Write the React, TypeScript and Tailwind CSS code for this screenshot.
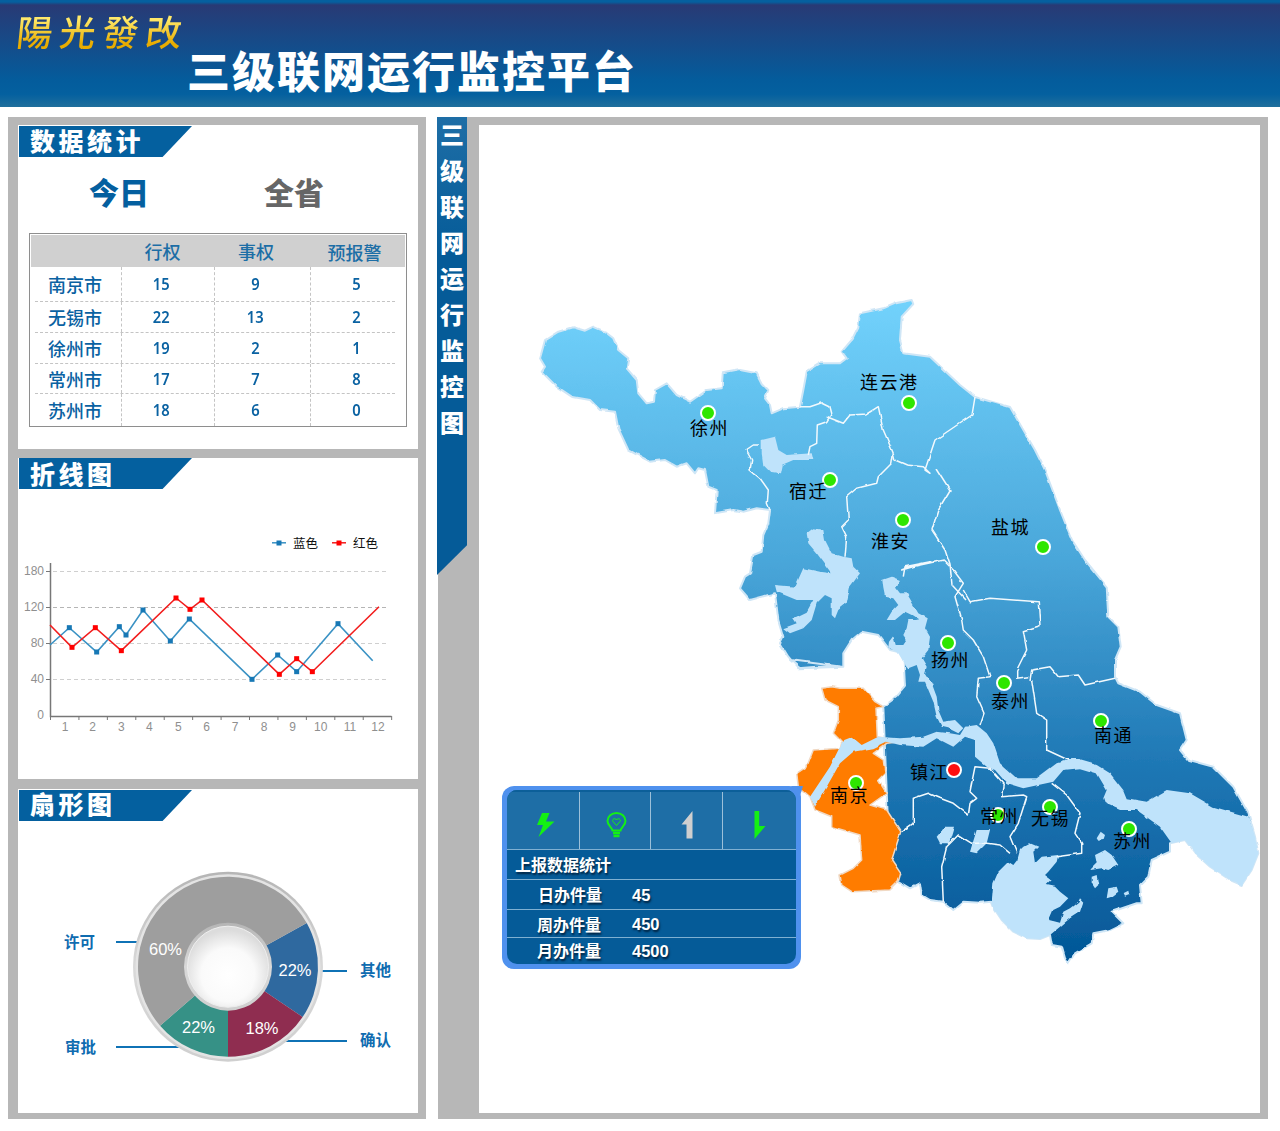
import React from "react";

const cjk = "font-['Noto_Sans_CJK_SC','Noto_Sans',sans-serif]";

type Pt = [number, number];
// traced from crops of the map, each at 3x scale from its own origin
const from = (ox: number, oy: number) => (p: number[]): Pt[] => {
  const out: Pt[] = [];
  for (let i = 0; i < p.length; i += 2) out.push([ox + p[i] / 3, oy + p[i + 1] / 3]);
  return out;
};
const a = from(530, 290);
const b = from(790, 560);
const c = from(980, 830);
const d = from(875, 570);
const pts = (p: Pt[]) => p.map(([x, y]) => `${x.toFixed(1)},${y.toFixed(1)}`).join(" ");

const outline: Pt[] = [
  ...a([30,205,45,150,85,125,130,112,165,122,190,110,225,125,250,145,265,180,295,205,290,235,320,270,325,310,350,340,372,335,375,300,410,280,440,315,480,335,530,300,575,295,578,250,630,240,680,250,695,280,715,300,705,325,720,345,725,370,760,355,810,350,820,300,830,245,870,220,930,220,950,205,935,185,965,150,985,110,990,70,1060,55,1095,40,1145,30,1150,42,1115,80,1110,150,1120,190,1200,200]),
  [960, 385],[975, 397],[1010, 407],[1035, 450],[1045, 470],[1060, 510],[1072, 540],
  ...b([885,0,950,80,955,170,985,200,992,260,975,300,975,350,985,370,1050,395,1100,435,1170,460,1190,540,1170,570,1195,600,1270,620,1330,680,1375,760,1395,830,1405,880,1385,930,1355,975,1320,960,1260,920,1215,880,1185,840,1140,850,1140,875,1085,900,1075,950,1050,975,1055,1030]),
  ...c([470,220,395,245,430,280,390,300,340,310,335,340,285,370,265,400,255,385,245,350,215,345,210,315,180,327,140,325,100,305,65,270,45,240,35,215,0,218]),
  ...b([520,1025,490,1050,460,1025,420,1020,395,1005,390,970,360,985,325,965,300,940,280,440,320,410,345,380,340,280,300,270,265,225,215,215,185,240,160,280,160,320,30,325,0,300]),
  ...a([935,1130,860,1130,805,1135,775,1100,750,1060,760,1040,745,990,735,910,660,930,630,895,645,860,660,850,670,795,695,785,700,735,715,700,720,660,680,655,640,665,610,660,555,670,560,600,535,590,525,540,505,535,495,550,470,520,440,530,405,510,360,515,295,480,265,415,255,365,210,360,180,330,125,320,80,290,35,245,45,230]),
];

const nanjing = b([95,385,125,380,150,385,220,385,255,425,280,440,258,445,262,530,320,540,330,545,290,550,250,580,280,600,285,640,265,660,290,700,240,735,290,750,332,815,305,900,332,940,325,965,300,990,185,995,155,975,150,945,190,925,215,900,210,825,125,800,125,770,75,750,60,710,25,680,20,640,50,620,70,570,150,565,155,545,130,520,145,480,145,440,105,420]);

const water: Pt[][] = [
  // 洪泽湖
  a([830,730,850,715,880,720,885,750,905,790,940,800,965,805,970,830,990,850,960,890,950,940,925,960,915,985,905,975,905,925,885,915,860,940,845,990,820,1015,780,1030,760,1015,800,1000,790,985,830,965,850,930,800,930,740,905,735,885,795,890,820,835,870,845,905,850,860,790,835,760]),
  // 骆马湖
  a([695,450,735,440,745,480,770,495,845,490,850,510,790,510,755,525,750,550,720,545,700,525,695,490]),
  // 高邮湖
  d([22,30,50,20,75,30,60,50,75,70,95,70,110,95,130,130,158,145,150,175,165,200,160,240,140,265,155,290,150,310,170,340,185,380,190,420,205,455,240,450,265,475,250,490,220,475,200,470,185,440,175,395,150,335,130,335,135,315,125,285,100,295,85,275,70,250,40,232,42,215,55,198,62,225,85,225,95,210,85,195,95,175,100,150,120,150,130,148,110,135,90,125,60,150,35,150,50,125,70,105,55,85,30,80,25,55]),
  // 长江
  b([60,710,120,620,160,540,185,530,215,555,265,530,330,535,400,530,440,515,480,520,510,525,525,500,560,495,590,520,610,550,630,610,680,655,740,655,800,610,850,595,920,615,960,640,1000,690,1010,715,1070,725,1130,690,1200,700,1270,740,1375,770,1395,830,1405,880,1385,930,1355,975,1320,960,1260,920,1215,880,1185,840,1145,850,1110,800,1040,750,990,750,945,730,940,715,950,690,920,640,870,625,820,630,790,665,700,685,650,670,615,630,590,620,555,590,555,540,525,530,490,560,440,535,400,560,330,555,290,545,250,565,190,575,150,610,110,680,75,740]),
  // 太湖
  c([35,215,40,160,55,125,85,95,100,105,112,90,120,60,130,50,150,40,175,50,160,65,165,100,185,80,235,75,230,95,205,125,195,135,215,150,200,165,225,170,240,185,265,205,240,230,220,240,207,270,240,278,250,245,270,235,295,215,300,205,310,215,300,245,270,265,240,290,210,315,180,327,140,325,100,305,65,270,45,240]),
  b([440,830,465,800,495,800,480,850,450,850]),
  b([540,875,560,810,600,810,590,850,560,880]),
  c([350,25,362,5,375,15,370,30,355,32]),
  c([330,120,350,100,345,75,375,60,395,75,415,105,385,120,365,115]),
  c([335,140,350,135,355,165,345,175,335,160]),
  c([380,205,385,175,410,170,415,185,395,200]),
  c([430,190,445,182,448,195,435,200]),
];

const borders: Pt[][] = [
  a([810,350,840,350,875,338,900,350,905,370,890,395,862,405,860,460,840,470,835,495]),
  a([690,465,670,465,648,480,665,510,660,540,690,565,715,600,712,640,720,660]),
  [...a([890,380,940,400,960,375,1010,372,1045,350,1060,420,1090,490,1095,510,1130,525,1180,530,1200,550]), [925, 470], [935, 440], [972, 415], [975, 397]],
  [[936, 468],[950, 490],[938, 510],[932, 530],[945, 550],[950, 565],[952, 585],[966, 600]],
  a([1090,490,1085,520,1045,560,1040,580,980,595,950,620,955,690,935,710,950,740,945,800]),
  [...a([1120,860,1125,830,1200,815]), ...b([335,30,345,25,460,0,490,30,520,70,495,110,515,180,520,210,550,240,580,290,600,350,565,355,560,410,582,460,570,495])],
  b([520,90,540,125,600,115,745,125,750,200,700,215,710,270,680,330,680,355,715,350]),
  b([720,360,725,330,780,320,805,350,865,345,885,375,975,355]),
  b([725,360,740,460,770,480,770,570,835,600]),
  b([335,815,370,790,370,715,415,700,450,715,490,730,535,765,540,730,560,715,540,695,555,620,600,625,640,670]),
  b([640,670,635,710,700,705,710,710,685,790,660,830,680,880]),
  b([785,670,830,705,870,760,855,820,875,850,875,880,800,890]),
  b([660,880,630,855,590,850,545,850,505,825,470,860,455,920,460,1025]),
];

const pins = [
  { name: "徐州", x: 708, y: 413, lx: 690, ly: 427 },
  { name: "连云港", x: 909, y: 403, lx: 860, ly: 381 },
  { name: "宿迁", x: 830, y: 480, lx: 789, ly: 490 },
  { name: "淮安", x: 903, y: 520, lx: 871, ly: 540 },
  { name: "盐城", x: 1043, y: 547, lx: 991, ly: 526 },
  { name: "扬州", x: 948, y: 643, lx: 931, ly: 659 },
  { name: "泰州", x: 1004, y: 683, lx: 991, ly: 700 },
  { name: "南通", x: 1101, y: 721, lx: 1094, ly: 734 },
  { name: "镇江", x: 954, y: 770, lx: 910, ly: 771, red: true },
  { name: "南京", x: 856, y: 783, lx: 830, ly: 794 },
  { name: "常州", x: 998, y: 815, lx: 980, ly: 815 },
  { name: "无锡", x: 1050, y: 807, lx: 1031, ly: 817 },
  { name: "苏州", x: 1129, y: 829, lx: 1113, ly: 840 },
];

const rows = [
  { name: "南京市", v: [15, 9, 5], h: "h-[35px]" },
  { name: "无锡市", v: [22, 13, 2], h: "h-[31px]" },
  { name: "徐州市", v: [19, 2, 1], h: "h-[31px]" },
  { name: "常州市", v: [17, 7, 8], h: "h-[30px]" },
  { name: "苏州市", v: [18, 6, 0], h: "h-[32px]" },
];

const SectionTitle = ({ text, nudge }: { text: string; nudge: string }) => (
  <div className={`w-[173px] h-[31px] ml-px ${nudge} bg-[#04609f] [clip-path:polygon(0_0,100%_0,83%_100%,0_100%)] pl-[11px] flex items-center text-white text-[25px] font-black tracking-[3.500px] leading-none ${cjk}`}>
    {text}
  </div>
);

const Num = ({ n }: { n: number }) => (
  <span className="inline-block scale-x-[.92] text-[16px] font-semibold text-[#0a62a2] font-['Noto_Sans',sans-serif]">{n}</span>
);

const LineChart = () => {
  const blue = [150,585,208,533,290,606,358,530,378,555,429,480,511,573,568,507,756,688,833,615,890,665,1014,521,1118,632];
  const red = [150,525,216,592,286,533,364,602,528,444,570,478,606,450,838,673,890,626,937,665,1137,470];
  const toPts = (p: number[]) => {
    const o: Pt[] = [];
    for (let i = 0; i < p.length; i += 2) o.push([p[i] / 3, p[i + 1] / 3 + 450]);
    return o;
  };
  const bp = toPts(blue);
  const rp = toPts(red);
  const labelsX = [65, 92.7, 121.3, 149.3, 178.3, 206.7, 235, 264, 292.7, 320.7, 350, 378];
  const grid: [number, string, string][] = [
    [571.5, "180", "#cfcfcf"],
    [607.5, "120", "#b5b5b5"],
    [643.5, "80", "#cfcfcf"],
    [679.5, "40", "#cfcfcf"],
  ];
  return (
    <svg viewBox="18 489 400 290" className="block w-[400px] h-[290px]">
      <g className="font-['Liberation_Sans',sans-serif]" fontSize="12" fill="#8f8f8f">
        {grid.map(([y, t, col]) => (
          <g key={t}>
            <line x1="53" x2="389" y1={y} y2={y} stroke={col} strokeDasharray="4 3" />
            <text x="44" y={y + 3} textAnchor="end">{t}</text>
          </g>
        ))}
        <text x="44" y="719" textAnchor="end">0</text>
        {labelsX.map((x, i) => (
          <text key={i} x={x} y="731" textAnchor="middle">{i + 1}</text>
        ))}
      </g>
      <path d="M50.5 563V716.5H391.5" fill="none" stroke="#777" strokeWidth="1.5" />
      {Array.from({ length: 13 }).map((_, i) => (
        <line key={i} x1={50.5 + i * 28.43} x2={50.5 + i * 28.43} y1="716" y2="720" stroke="#777" />
      ))}
      {grid.map(([y]) => (
        <line key={y} x1="46" x2="50" y1={y} y2={y} stroke="#777" />
      ))}
      <polyline points={pts(bp)} fill="none" stroke="#3a92c4" strokeWidth="1.6" />
      {bp.slice(1, -1).map(([x, y], i) => (
        <rect key={i} x={x - 2.5} y={y - 2.5} width="5" height="5" fill="#1778b5" />
      ))}
      <polyline points={pts(rp)} fill="none" stroke="#f21d1d" strokeWidth="1.6" />
      {rp.slice(1, -1).map(([x, y], i) => (
        <rect key={i} x={x - 2.5} y={y - 2.5} width="5" height="5" fill="#ff0000" />
      ))}
      <line x1="272" x2="286" y1="542.8" y2="542.8" stroke="#3a92c4" strokeWidth="1.5" />
      <rect x="276.5" y="540.5" width="5" height="5" fill="#1778b5" />
      <text x="293" y="547.5" fontSize="12.5" fill="#111" className={cjk}>蓝色</text>
      <line x1="332" x2="346" y1="542.8" y2="542.8" stroke="#f21d1d" strokeWidth="1.5" />
      <rect x="336.5" y="540.5" width="5" height="5" fill="#ff0000" />
      <text x="353" y="547.5" fontSize="12.5" fill="#111" className={cjk}>红色</text>
    </svg>
  );
};

const Donut = () => {
  const cx = 228;
  const cy = 966.7;
  const R = 90;
  const r = 40;
  const p = (rad: number, deg: number) => {
    const t = (deg * Math.PI) / 180;
    return `${(cx + rad * Math.sin(t)).toFixed(2)} ${(cy - rad * Math.cos(t)).toFixed(2)}`;
  };
  const sector = (s: number, e: number) => {
    const big = e - s > 180 ? 1 : 0;
    return `M${p(r, s)}A${r} ${r} 0 ${big} 1 ${p(r, e)}L${p(R, e)}A${R} ${R} 0 ${big} 0 ${p(R, s)}Z`;
  };
  return (
    <svg viewBox="18 821 400 292" className="block w-[400px] h-[292px]">
      <defs>
        <linearGradient id="ring" x1="0" y1="0" x2="0" y2="1">
          <stop offset="0" stopColor="#b5b5b5" />
          <stop offset="0.5" stopColor="#d9d9d9" />
          <stop offset="1" stopColor="#cfcfcf" />
        </linearGradient>
        <radialGradient id="core" cx="0.5" cy="0.6" r="0.55">
          <stop offset="0" stopColor="#ffffff" />
          <stop offset="0.6" stopColor="#fafafa" />
          <stop offset="1" stopColor="#dcdcdc" />
        </radialGradient>
      </defs>
      <g stroke="#0f72b5" strokeWidth="2">
        <line x1="116" x2="140" y1="942" y2="942" />
        <line x1="320" x2="347" y1="971" y2="971" />
        <line x1="285" x2="347" y1="1041" y2="1041" />
        <line x1="116" x2="180" y1="1047" y2="1047" />
      </g>
      <circle cx={cx} cy={cy} r="95" fill="url(#ring)" />
      <circle cx={cx} cy={cy} r="92.5" fill="#e4e4e4" />
      <path d={sector(61, 124)} fill="#2f699f" />
      <path d={sector(124, 180)} fill="#8f2d50" />
      <path d={sector(180, 229)} fill="#369186" />
      <path d={sector(229, 421)} fill="#9e9e9e" />
      <circle cx={cx} cy={cy} r="44" fill="url(#ring)" />
      <circle cx={cx} cy={cy} r="40.5" fill="url(#core)" stroke="#efefef" />
      <g fill="#fff" fontSize="16.5" className="font-['Liberation_Sans',sans-serif]" textAnchor="middle">
        <text x="165.5" y="955">60%</text>
        <text x="295" y="976">22%</text>
        <text x="198.5" y="1033">22%</text>
        <text x="262" y="1034">18%</text>
      </g>
      <g fill="#0f6cb0" fontSize="15.5" fontWeight="600" className={cjk} textAnchor="middle">
        <text x="79.5" y="948">许可</text>
        <text x="375.5" y="976">其他</text>
        <text x="375.5" y="1046">确认</text>
        <text x="80.5" y="1053">审批</text>
      </g>
    </svg>
  );
};

const MapShape = () => (
  <svg viewBox="479 125 781 988" className="absolute inset-0 w-full h-full">
    <defs>
      <linearGradient id="land" gradientUnits="userSpaceOnUse" x1="0" x2="0" y1="300" y2="960">
        <stop offset="0" stopColor="#72d2fc" />
        <stop offset="0.39" stopColor="#4aa7da" />
        <stop offset="0.7" stopColor="#1f78b5" />
        <stop offset="1" stopColor="#035797" />
      </linearGradient>
      <filter id="rough" filterUnits="userSpaceOnUse" x="479" y="125" width="781" height="988">
        <feTurbulence type="fractalNoise" baseFrequency="0.09" numOctaves="2" seed="4" />
        <feDisplacementMap in="SourceGraphic" scale="3" xChannelSelector="R" yChannelSelector="G" />
      </filter>
    </defs>
    <g filter="url(#rough)">
      <polygon points={pts(outline)} fill="url(#land)" stroke="#cfe6f6" strokeWidth="2" strokeLinejoin="round" />
      <polygon points={pts(nanjing)} fill="#ff7b00" stroke="#f0d9c4" strokeWidth="1.5" strokeLinejoin="round" />
      {water.map((w, i) => (
        <polygon key={i} points={pts(w)} fill="#bfe3fb" />
      ))}
      {borders.map((l, i) => (
        <polyline key={i} points={pts(l)} fill="none" stroke="#f2f9fd" strokeWidth="1.5" strokeLinejoin="round" />
      ))}
    </g>
  </svg>
);

const Pop = () => (
  <div className="absolute left-[23px] top-[661px] w-[299px] h-[183px] bg-[#4f91ee] rounded-[12px] p-[5px] pt-[4px]">
    <div className="absolute right-[-2px] top-0 w-[12px] h-[12px] bg-[#4f91ee] [clip-path:polygon(0_0,100%_0,70%_100%)]" />
    <div className={`h-full rounded-[10px] overflow-hidden bg-[#055b98] text-white font-bold ${cjk} text-[16px] [text-shadow:1px_2px_2px_#00223f]`}>
      <div className="flex h-[60px] bg-[#1e6ea6] border-t-2 border-[#0c5f99] border-b border-b-[#7fb0d2]">
        <div className="w-[73px] border-r border-[#9cc0d9] flex items-center justify-center pt-[8px] pl-[6px]">
          <svg width="18" height="24" viewBox="0 0 18 24"><polygon points="5,0 12.500,0 9,8.500 17.500,8.500 1.500,24 6,12 0,12" fill="#14f014" /></svg>
        </div>
        <div className="w-[71px] border-r border-[#9cc0d9] flex items-center justify-center pt-[8px] pl-[3px]">
          <svg width="21" height="26" viewBox="0 0 21 26" fill="none" stroke="#14f014">
            <path d="M6.500 18.500C6 15 1.500 13.500 1.500 9a9 8 0 0 1 18 0c0 4.500-4.500 6-5 9.500z" strokeWidth="2" />
            <path d="M10.500 13.500 7 9.500c-1.500-2.500 2.500-4 3.500-1.500 1-2.500 5-1 3.500 1.500z" strokeWidth="1" />
            <path d="M7 21h7M7.500 24h6" strokeWidth="2.500" />
          </svg>
        </div>
        <div className="w-[72px] border-r border-[#9cc0d9] flex items-center justify-center pt-[8px]">
          <svg width="12" height="28" viewBox="0 0 12 28"><polygon points="11.500,0 11.500,27.500 5.500,27.500 5.500,13.500 0.500,13.500" fill="#cfcfcf" /></svg>
        </div>
        <div className="flex-1 flex items-center justify-center pt-[8px]">
          <svg width="12" height="28" viewBox="0 0 12 28"><polygon points="0.500,0 5.200,0 5.200,15 11.500,15 0.500,28" fill="#14f014" /></svg>
        </div>
      </div>
      <div className="h-[30px] pl-[8px] pb-[2px] flex items-center border-b border-[#7fb0d2]">上报数据统计</div>
      <div className="h-[30px] pl-[31px] flex items-center border-b border-[#7fb0d2]">
        <span className="w-[94px] pb-[2px]">日办件量</span>
        <span className="text-[16.500px] pt-[1px] font-['Liberation_Sans',sans-serif]">45</span>
      </div>
      <div className="h-[28px] pl-[30px] flex items-center border-b border-[#7fb0d2]">
        <span className="w-[95px]">周办件量</span>
        <span className="text-[16.500px] pt-[2px] font-['Liberation_Sans',sans-serif]">450</span>
      </div>
      <div className="h-[26px] pl-[30px] flex items-center">
        <span className="w-[95px] pb-[2px]">月办件量</span>
        <span className="text-[16.500px] pt-[1px] font-['Liberation_Sans',sans-serif]">4500</span>
      </div>
    </div>
  </div>
);

export default function App() {
  return (
    <div className={`w-[1280px] h-[1131px] bg-white overflow-hidden ${cjk}`}>
      <header className="relative h-[107px] bg-[linear-gradient(180deg,#05609f_0,#05609f_2px,#283a75_5px,#045c9c_75%,#04609f_88%,#206f9c_100%)]">
        <div className="absolute left-[17px] top-[3px] text-[36px] leading-[54px] font-medium tracking-[7px] -skew-x-6 bg-[linear-gradient(180deg,#ffe96a_30%,#e8ac00_75%)] bg-clip-text text-transparent">
          陽光發改
        </div>
        <div className="absolute left-[187px] top-[35px] text-[43px] leading-[68px] font-black tracking-[2px] text-white">
          三级联网运行监控平台
        </div>
      </header>

      <main className="flex pt-[10px] pl-[8px]">
        <aside className="w-[418px] h-[1002px] bg-[#b7b7b7] pl-[10px] pr-[8px] pt-[8px] flex flex-col gap-[9px] shrink-0">
          <section className="h-[324px] bg-white pt-px">
            <SectionTitle text="数据统计" nudge="pb-[2px]" />
            <div className="relative h-[76px] text-[30px] font-black">
              <span className="absolute left-[71px] top-[12px] text-[#045f9f]">今日</span>
              <span className="absolute left-[246px] top-[12px] text-[#666]">全省</span>
            </div>
            <div className="ml-[11px] w-[378px] h-[194px] border border-[#8e8e8e]">
              <div className="h-[32px] mt-px mx-px bg-[#d0d0d0] grid grid-cols-[90px_93px_96px_1fr] items-center text-center text-[18px] text-[#1c6ea6] font-medium">
                <span />
                <span className="pr-[10px]">行权</span>
                <span className="pr-[12px]">事权</span>
                <span className="pt-[2px] pr-[6px]">预报警</span>
              </div>
              {rows.map((r, i) => (
                <div key={r.name} className={`${r.h} ml-[5px] mr-[11px] grid grid-cols-[87px_93px_96px_1fr] ${i < 4 ? "border-b border-dashed border-[#c4c4c4]" : ""}`}>
                  <span className="border-r border-dashed border-[#c4c4c4] pl-[13px] flex items-center text-[18px] font-medium text-[#0a62a2] leading-none">{r.name}</span>
                  <span className="border-r border-dashed border-[#c4c4c4] flex items-center justify-center pr-[14px]"><Num n={r.v[0]} /></span>
                  <span className="border-r border-dashed border-[#c4c4c4] flex items-center justify-center pr-[14px]"><Num n={r.v[1]} /></span>
                  <span className="flex items-center justify-center pl-[7px]"><Num n={r.v[2]} /></span>
                </div>
              ))}
            </div>
          </section>
          <section className="h-[321px] bg-white">
            <SectionTitle text="折线图" nudge="pb-0" />
            <LineChart />
          </section>
          <section className="h-[324px] mt-px bg-white pt-px">
            <SectionTitle text="扇形图" nudge="pb-[5px]" />
            <Donut />
          </section>
        </aside>

        <div className="relative ml-[12px] w-[830px] h-[1002px] bg-[#b7b7b7] pl-[41px] pr-[8px] pt-[8px] pb-[6px] shrink-0">
          <div className="absolute left-[-1px] top-0 w-[30px] h-[458px] bg-[linear-gradient(180deg,#1e6ea6,#055b98_30%)] [clip-path:polygon(0_0,100%_0,100%_93.500%,0_100%)] flex flex-col items-center text-white text-[24px] font-black leading-[36px]">
            <div className="flex flex-col items-center -mt-px">
              {"三级联网运行监控图".split("").map((ch, i) => (
                <span key={i}>{ch}</span>
              ))}
            </div>
          </div>
          <div className="relative h-full bg-white">
            <MapShape />
            {pins.map((p) => (
              <React.Fragment key={p.name}>
                <span
                  className={`absolute w-[16px] h-[16px] rounded-full border-2 border-white ${p.red ? "bg-[#ff0f0f]" : "bg-[#2ee600]"}`}
                  style={{ left: p.x - 479 - 8, top: p.y - 125 - 8 }}
                />
                <span
                  className="absolute text-[18px] leading-[20px] tracking-[1.500px] text-black whitespace-nowrap"
                  style={{ left: p.lx - 479, top: p.ly - 125 - 10 }}
                >
                  {p.name}
                </span>
              </React.Fragment>
            ))}
            <Pop />
          </div>
        </div>
      </main>
    </div>
  );
}
